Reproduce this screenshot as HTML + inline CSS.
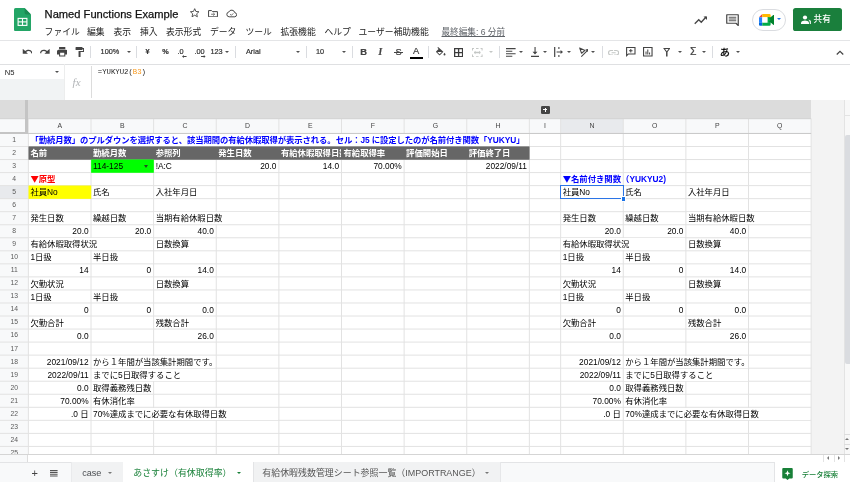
<!DOCTYPE html>
<html lang="ja"><head><meta charset="utf-8"><title>Named Functions Example</title>
<style>
html,body{margin:0;padding:0;}
html{background:#fff;}
body{will-change:transform;width:850px;height:482px;overflow:hidden;background:#fff;position:relative;font-family:"Liberation Sans","Noto Sans CJK JP",sans-serif;color:#000;}
.a{position:absolute;}
.t{position:absolute;white-space:nowrap;line-height:1;}
.cell{position:absolute;white-space:nowrap;font-size:8.35px;line-height:13.04px;height:13.04px;overflow:visible;}
.r{text-align:right;}
.j{font-family:"Noto Sans CJK JP",sans-serif;}
.b{font-weight:bold;}
.hl{position:absolute;height:1px;background:#e7e7e7;}
.vl{position:absolute;width:1px;background:#e7e7e7;}
.ch{position:absolute;font-size:6.9px;color:#444;text-align:center;line-height:14px;}
.rh{position:absolute;font-size:6.8px;color:#5a5a5a;text-align:center;left:0;width:28.4px;}
.menu{position:absolute;top:25.5px;font-size:8.8px;color:#222;white-space:nowrap;line-height:12px;}
.ic{position:absolute;}
.sep{position:absolute;top:46px;width:1px;height:12px;background:#dadce0;}
.tb{position:absolute;-webkit-text-stroke:0.2px #333;font-size:7.3px;color:#333;line-height:10px;white-space:nowrap;top:47px;}
.dd{position:absolute;width:0;height:0;margin-left:-0.2px;border-left:2.500px solid transparent;border-right:2.500px solid transparent;border-top:2.800px solid #505050;}
</style></head><body>

<div class="a" style="left:0;top:100px;width:850px;height:19px;background:#dcdcdc;"></div>
<div class="a" style="left:0;top:118.7px;width:811.1px;height:14.8px;background:#f8f9fa;"></div>
<div class="a" style="left:0;top:133.5px;width:28.4px;height:328.5px;background:#f8f9fa;"></div>
<div class="a" style="left:811.1px;top:100px;width:38.9px;height:354.3px;background:#f3f3f3;"></div>
<div class="a" style="left:560.7px;top:118.7px;width:62.6px;height:14.8px;background:#e8eaed;"></div>
<div class="a" style="left:0;top:185.6px;width:28.4px;height:13.0px;background:#e8eaed;"></div>
<svg class="a" style="left:0;top:0;" width="850" height="482" viewBox="0 0 850 482"><path d="M0 133.46H811.14M0 146.50H811.14M0 159.54H811.14M0 172.58H811.14M0 185.62H811.14M0 198.66H811.14M0 211.70H811.14M0 224.74H811.14M0 237.78H811.14M0 250.82H811.14M0 263.86H811.14M0 276.90H811.14M0 289.94H811.14M0 302.98H811.14M0 316.02H811.14M0 329.06H811.14M0 342.10H811.14M0 355.14H811.14M0 368.18H811.14M0 381.22H811.14M0 394.26H811.14M0 407.30H811.14M0 420.34H811.14M0 433.38H811.14M0 446.42H811.14M28.40 118.70V454.30M91.02 118.70V454.30M153.64 118.70V454.30M216.26 118.70V454.30M278.88 118.70V454.30M341.50 118.70V454.30M404.12 118.70V454.30M466.74 118.70V454.30M529.36 118.70V454.30M560.66 118.70V454.30M623.28 118.70V454.30M685.90 118.70V454.30M748.52 118.70V454.30M811.14 118.70V454.30" stroke="#e2e2e2" stroke-width="1" fill="none"/><path d="M0 133.46H811.14" stroke="#c9c9c9" stroke-width="1" fill="none"/><path d="M0 118.70H811.14" stroke="#d3d3d3" stroke-width="1" fill="none"/></svg>
<div class="a" style="left:25.3px;top:100px;width:3px;height:33.5px;background:#c4c4c4;"></div>
<div class="a" style="left:0;top:132.2px;width:28.3px;height:1.6px;background:#c4c4c4;"></div>
<div class="ch" style="left:28.4px;top:119.1px;width:62.6px;">A</div>
<div class="ch" style="left:91.0px;top:119.1px;width:62.6px;">B</div>
<div class="ch" style="left:153.6px;top:119.1px;width:62.6px;">C</div>
<div class="ch" style="left:216.3px;top:119.1px;width:62.6px;">D</div>
<div class="ch" style="left:278.9px;top:119.1px;width:62.6px;">E</div>
<div class="ch" style="left:341.5px;top:119.1px;width:62.6px;">F</div>
<div class="ch" style="left:404.1px;top:119.1px;width:62.6px;">G</div>
<div class="ch" style="left:466.7px;top:119.1px;width:62.6px;">H</div>
<div class="ch" style="left:529.4px;top:119.1px;width:31.3px;">I</div>
<div class="ch" style="left:560.7px;top:119.1px;width:62.6px;">N</div>
<div class="ch" style="left:623.3px;top:119.1px;width:62.6px;">O</div>
<div class="ch" style="left:685.9px;top:119.1px;width:62.6px;">P</div>
<div class="ch" style="left:748.5px;top:119.1px;width:62.6px;">Q</div>
<div class="rh" style="top:132.86px;line-height:13.04px;height:13.04px;">1</div>
<div class="rh" style="top:145.90px;line-height:13.04px;height:13.04px;">2</div>
<div class="rh" style="top:158.94px;line-height:13.04px;height:13.04px;">3</div>
<div class="rh" style="top:171.98px;line-height:13.04px;height:13.04px;">4</div>
<div class="rh" style="top:185.02px;line-height:13.04px;height:13.04px;">5</div>
<div class="rh" style="top:198.06px;line-height:13.04px;height:13.04px;">6</div>
<div class="rh" style="top:211.10px;line-height:13.04px;height:13.04px;">7</div>
<div class="rh" style="top:224.14px;line-height:13.04px;height:13.04px;">8</div>
<div class="rh" style="top:237.18px;line-height:13.04px;height:13.04px;">9</div>
<div class="rh" style="top:250.22px;line-height:13.04px;height:13.04px;">10</div>
<div class="rh" style="top:263.26px;line-height:13.04px;height:13.04px;">11</div>
<div class="rh" style="top:276.30px;line-height:13.04px;height:13.04px;">12</div>
<div class="rh" style="top:289.34px;line-height:13.04px;height:13.04px;">13</div>
<div class="rh" style="top:302.38px;line-height:13.04px;height:13.04px;">14</div>
<div class="rh" style="top:315.42px;line-height:13.04px;height:13.04px;">15</div>
<div class="rh" style="top:328.46px;line-height:13.04px;height:13.04px;">16</div>
<div class="rh" style="top:341.50px;line-height:13.04px;height:13.04px;">17</div>
<div class="rh" style="top:354.54px;line-height:13.04px;height:13.04px;">18</div>
<div class="rh" style="top:367.58px;line-height:13.04px;height:13.04px;">19</div>
<div class="rh" style="top:380.62px;line-height:13.04px;height:13.04px;">20</div>
<div class="rh" style="top:393.66px;line-height:13.04px;height:13.04px;">21</div>
<div class="rh" style="top:406.70px;line-height:13.04px;height:13.04px;">22</div>
<div class="rh" style="top:419.74px;line-height:13.04px;height:13.04px;">23</div>
<div class="rh" style="top:432.78px;line-height:13.04px;height:13.04px;">24</div>
<div class="rh" style="top:445.82px;line-height:13.04px;height:8.48px;overflow:hidden;">25</div>
<div class="a" style="left:29.00px;top:134.06px;width:499.56px;height:11.84px;background:#fff;"></div>
<svg class="a" style="left:0;top:0;" width="850" height="482"><rect x="28.50" y="146.40" width="501.06" height="13.34" fill="#666666"/></svg>
<svg class="a" style="left:0;top:0;" width="850" height="482"><rect x="91.12" y="159.44" width="62.72" height="13.34" fill="#00ff00"/></svg>
<svg class="a" style="left:0;top:0;" width="850" height="482"><rect x="28.50" y="185.52" width="62.72" height="13.34" fill="#ffff00"/></svg>
<div class="cell b" style="left:30.40px;top:134.06px;color:#0000ff;letter-spacing:-0.085px;">「勤続月数」のプルダウンを選択すると、該当期間の有給休暇取得が表示される。セル：J5 に設定したのが名前付き関数「YUKYU」</div>
<div class="cell b" style="left:30.40px;top:147.10px;color:#fff;">名前</div>
<div class="cell b" style="left:93.02px;top:147.10px;color:#fff;">勤続月数</div>
<div class="cell b" style="left:155.64px;top:147.10px;color:#fff;">参照列</div>
<div class="cell b" style="left:218.26px;top:147.10px;color:#fff;">発生日数</div>
<div class="cell b" style="left:280.88px;top:147.10px;color:#fff;width:60.2px;overflow:hidden;">有給休暇取得日数</div>
<div class="cell b" style="left:343.50px;top:147.10px;color:#fff;">有給取得率</div>
<div class="cell b" style="left:406.12px;top:147.10px;color:#fff;">評価開始日</div>
<div class="cell b" style="left:468.74px;top:147.10px;color:#fff;">評価終了日</div>
<div class="cell " style="left:93.02px;top:160.14px;">114-125</div>
<div class="dd" style="left:144.6px;top:164.9px;border-top-color:#234a23;border-left-width:2.800px;border-right-width:2.800px;border-top-width:3.100px;"></div>
<div class="cell " style="left:155.64px;top:160.14px;">!A:C</div>
<div class="cell r" style="left:216.26px;top:160.14px;width:60.22px;">20.0</div>
<div class="cell r" style="left:278.88px;top:160.14px;width:60.22px;">14.0</div>
<div class="cell r" style="left:341.50px;top:160.14px;width:60.22px;">70.00%</div>
<div class="cell r" style="left:466.74px;top:160.14px;width:60.22px;">2022/09/11</div>
<div class="cell b" style="left:30.40px;top:173.18px;color:#ff0000;margin-top:-1px;"><span class="j">▼</span>原型</div>
<div class="cell b" style="left:562.66px;top:173.18px;color:#0000ff;margin-top:-1px;"><span class="j">▼</span>名前付き関数（YUKYU2)</div>
<div class="cell " style="left:30.40px;top:186.22px;">社員No</div>
<div class="cell " style="left:93.02px;top:186.22px;">氏名</div>
<div class="cell " style="left:155.64px;top:186.22px;">入社年月日</div>
<div class="cell " style="left:30.40px;top:212.30px;">発生日数</div>
<div class="cell " style="left:93.02px;top:212.30px;">繰越日数</div>
<div class="a" style="left:154.24px;top:212.30px;width:123.84px;height:11.84px;background:#fff;"></div>
<div class="cell " style="left:155.64px;top:212.30px;">当期有給休暇日数</div>
<div class="cell r" style="left:28.40px;top:225.34px;width:60.22px;">20.0</div>
<div class="cell r" style="left:91.02px;top:225.34px;width:60.22px;">20.0</div>
<div class="cell r" style="left:153.64px;top:225.34px;width:60.22px;">40.0</div>
<div class="a" style="left:29.00px;top:238.38px;width:123.84px;height:11.84px;background:#fff;"></div>
<div class="cell " style="left:30.40px;top:238.38px;">有給休暇取得状況</div>
<div class="cell " style="left:155.64px;top:238.38px;">日数換算</div>
<div class="cell " style="left:30.40px;top:251.42px;">1日扱</div>
<div class="cell " style="left:93.02px;top:251.42px;">半日扱</div>
<div class="cell r" style="left:28.40px;top:264.46px;width:60.22px;">14</div>
<div class="cell r" style="left:91.02px;top:264.46px;width:60.22px;">0</div>
<div class="cell r" style="left:153.64px;top:264.46px;width:60.22px;">14.0</div>
<div class="cell " style="left:30.40px;top:277.50px;">欠勤状況</div>
<div class="cell " style="left:155.64px;top:277.50px;">日数換算</div>
<div class="cell " style="left:30.40px;top:290.54px;">1日扱</div>
<div class="cell " style="left:93.02px;top:290.54px;">半日扱</div>
<div class="cell r" style="left:28.40px;top:303.58px;width:60.22px;">0</div>
<div class="cell r" style="left:91.02px;top:303.58px;width:60.22px;">0</div>
<div class="cell r" style="left:153.64px;top:303.58px;width:60.22px;">0.0</div>
<div class="cell " style="left:30.40px;top:316.62px;">欠勤合計</div>
<div class="cell " style="left:155.64px;top:316.62px;">残数合計</div>
<div class="cell r" style="left:28.40px;top:329.66px;width:60.22px;">0.0</div>
<div class="cell r" style="left:153.64px;top:329.66px;width:60.22px;">26.0</div>
<div class="cell r" style="left:28.40px;top:355.74px;width:60.22px;">2021/09/12</div>
<div class="a" style="left:91.62px;top:355.74px;width:123.84px;height:11.84px;background:#fff;"></div>
<div class="cell " style="left:93.02px;top:355.74px;">から１年間が当該集計期間です。</div>
<div class="cell r" style="left:28.40px;top:368.78px;width:60.22px;">2022/09/11</div>
<div class="a" style="left:91.62px;top:368.78px;width:123.84px;height:11.84px;background:#fff;"></div>
<div class="cell " style="left:93.02px;top:368.78px;">までに5日取得すること</div>
<div class="cell r" style="left:28.40px;top:381.82px;width:60.22px;">0.0</div>
<div class="cell " style="left:93.02px;top:381.82px;">取得義務残日数</div>
<div class="cell r" style="left:28.40px;top:394.86px;width:60.22px;">70.00%</div>
<div class="cell " style="left:93.02px;top:394.86px;">有休消化率</div>
<div class="cell r" style="left:28.40px;top:407.90px;width:60.22px;">.0 日</div>
<div class="a" style="left:91.62px;top:407.90px;width:186.46px;height:11.84px;background:#fff;"></div>
<div class="cell " style="left:93.02px;top:407.90px;">70%達成までに必要な有休取得日数</div>
<div class="cell " style="left:562.66px;top:186.22px;">社員No</div>
<div class="cell " style="left:625.28px;top:186.22px;">氏名</div>
<div class="cell " style="left:687.90px;top:186.22px;">入社年月日</div>
<div class="cell " style="left:562.66px;top:212.30px;">発生日数</div>
<div class="cell " style="left:625.28px;top:212.30px;">繰越日数</div>
<div class="a" style="left:686.50px;top:212.30px;width:123.84px;height:11.84px;background:#fff;"></div>
<div class="cell " style="left:687.90px;top:212.30px;">当期有給休暇日数</div>
<div class="cell r" style="left:560.66px;top:225.34px;width:60.22px;">20.0</div>
<div class="cell r" style="left:623.28px;top:225.34px;width:60.22px;">20.0</div>
<div class="cell r" style="left:685.90px;top:225.34px;width:60.22px;">40.0</div>
<div class="a" style="left:561.26px;top:238.38px;width:123.84px;height:11.84px;background:#fff;"></div>
<div class="cell " style="left:562.66px;top:238.38px;">有給休暇取得状況</div>
<div class="cell " style="left:687.90px;top:238.38px;">日数換算</div>
<div class="cell " style="left:562.66px;top:251.42px;">1日扱</div>
<div class="cell " style="left:625.28px;top:251.42px;">半日扱</div>
<div class="cell r" style="left:560.66px;top:264.46px;width:60.22px;">14</div>
<div class="cell r" style="left:623.28px;top:264.46px;width:60.22px;">0</div>
<div class="cell r" style="left:685.90px;top:264.46px;width:60.22px;">14.0</div>
<div class="cell " style="left:562.66px;top:277.50px;">欠勤状況</div>
<div class="cell " style="left:687.90px;top:277.50px;">日数換算</div>
<div class="cell " style="left:562.66px;top:290.54px;">1日扱</div>
<div class="cell " style="left:625.28px;top:290.54px;">半日扱</div>
<div class="cell r" style="left:560.66px;top:303.58px;width:60.22px;">0</div>
<div class="cell r" style="left:623.28px;top:303.58px;width:60.22px;">0</div>
<div class="cell r" style="left:685.90px;top:303.58px;width:60.22px;">0.0</div>
<div class="cell " style="left:562.66px;top:316.62px;">欠勤合計</div>
<div class="cell " style="left:687.90px;top:316.62px;">残数合計</div>
<div class="cell r" style="left:560.66px;top:329.66px;width:60.22px;">0.0</div>
<div class="cell r" style="left:685.90px;top:329.66px;width:60.22px;">26.0</div>
<div class="cell r" style="left:560.66px;top:355.74px;width:60.22px;">2021/09/12</div>
<div class="a" style="left:623.88px;top:355.74px;width:123.84px;height:11.84px;background:#fff;"></div>
<div class="cell " style="left:625.28px;top:355.74px;">から１年間が当該集計期間です。</div>
<div class="cell r" style="left:560.66px;top:368.78px;width:60.22px;">2022/09/11</div>
<div class="a" style="left:623.88px;top:368.78px;width:123.84px;height:11.84px;background:#fff;"></div>
<div class="cell " style="left:625.28px;top:368.78px;">までに5日取得すること</div>
<div class="cell r" style="left:560.66px;top:381.82px;width:60.22px;">0.0</div>
<div class="cell " style="left:625.28px;top:381.82px;">取得義務残日数</div>
<div class="cell r" style="left:560.66px;top:394.86px;width:60.22px;">70.00%</div>
<div class="cell " style="left:625.28px;top:394.86px;">有休消化率</div>
<div class="cell r" style="left:560.66px;top:407.90px;width:60.22px;">.0 日</div>
<div class="a" style="left:623.88px;top:407.90px;width:186.46px;height:11.84px;background:#fff;"></div>
<div class="cell " style="left:625.28px;top:407.90px;">70%達成までに必要な有休取得日数</div>
<div class="a" style="left:559.86px;top:184.82px;width:64.02px;height:14.44px;border:1.4px solid #2b74e6;box-sizing:border-box;"></div>
<div class="a" style="left:620.68px;top:196.06px;width:3.6px;height:3.6px;background:#1a73e8;border:0.5px solid #fff;"></div>
<div class="a" style="left:541px;top:105.5px;width:8.5px;height:8.5px;background:#444;border-radius:1.3px;"></div>
<div class="a" style="left:543.2px;top:109.3px;width:4.2px;height:1px;background:#fff;"></div><div class="a" style="left:544.8px;top:107.7px;width:1px;height:4.2px;background:#fff;"></div>
<div class="a" style="left:843.5px;top:100px;width:6.5px;height:354px;background:#f8f8f8;border-left:1px solid #e3e3e3;box-sizing:border-box;"></div>
<div class="a" style="left:844px;top:114.500px;width:6px;height:1px;background:#e3e3e3;"></div>
<div class="a" style="left:845.3px;top:134.5px;width:4.7px;height:229px;background:#dadce0;border-radius:2px 0 0 2px;"></div>
<div class="a" style="left:843.5px;top:434px;width:6.5px;height:1px;background:#ddd;"></div><div class="a" style="left:843.5px;top:444px;width:6.5px;height:1px;background:#ddd;"></div>
<div class="a" style="left:845.200px;top:438.200px;width:0;height:0;border-left:2px solid transparent;border-right:2px solid transparent;border-bottom:2.500px solid #777;"></div>
<div class="a" style="left:845.200px;top:447.600px;width:0;height:0;border-left:2px solid transparent;border-right:2px solid transparent;border-top:2.500px solid #777;"></div>
<div class="a" style="left:0;top:454.3px;width:850px;height:8px;background:#fff;"></div>
<div class="a" style="left:0;top:454.3px;width:28.3px;height:8px;background:#f8f9fa;border-right:1px solid #ddd;box-sizing:border-box;"></div>
<div class="a" style="left:0;top:453.8px;width:850px;height:1px;background:#d5d5d5;"></div>
<div class="a" style="left:822.5px;top:454.8px;width:1px;height:7px;background:#e3e3e3;"></div><div class="a" style="left:833.5px;top:454.8px;width:1px;height:7px;background:#e3e3e3;"></div><div class="a" style="left:843.5px;top:454.8px;width:1px;height:7px;background:#e3e3e3;"></div>
<div class="a" style="left:826.600px;top:456.200px;width:0;height:0;border-top:2.100px solid transparent;border-bottom:2.100px solid transparent;border-right:2.600px solid #777;"></div>
<div class="a" style="left:837.800px;top:456.200px;width:0;height:0;border-top:2.100px solid transparent;border-bottom:2.100px solid transparent;border-left:2.600px solid #777;"></div><!-- ===== header ===== -->
<div class="a" style="left:0;top:0;width:850px;height:40px;background:#fff;"></div>
<svg class="ic" style="left:14px;top:8.2px;" width="17" height="23.2" viewBox="0 0 17 23.2">
  <path d="M1.6 0 H10.6 L17 6.4 V21.6 Q17 23.2 15.4 23.2 H1.6 Q0 23.2 0 21.6 V1.6 Q0 0 1.6 0 Z" fill="#23a566"/>
  <path d="M10.6 0 L17 6.4 H12.2 Q10.6 6.4 10.6 4.8 Z" fill="#1c8a53"/>
  <rect x="4.1" y="10.4" width="8.8" height="7" fill="none" stroke="#fff" stroke-width="1.1"/>
  <line x1="8.5" y1="10.4" x2="8.5" y2="17.4" stroke="#fff" stroke-width="1.1"/>
  <line x1="4.1" y1="13.9" x2="12.9" y2="13.9" stroke="#fff" stroke-width="1.1"/>
</svg>
<div class="t" id="title" style="left:44.6px;top:7.6px;font-size:11.15px;line-height:13px;color:#111;letter-spacing:0px;-webkit-text-stroke:0.25px #111;">Named Functions Example</div>
<!-- star, move, cloud -->
<svg class="ic" style="left:189.400px;top:7.400px;" width="11.400" height="11.400" viewBox="0 0 24 24"><path d="M12 3.500l2.600 5.900 6.400.600-4.800 4.300 1.400 6.300L12 17.300 6.400 20.600l1.400-6.300L3 10l6.400-.600z" fill="none" stroke="#444" stroke-width="1.900"/></svg>
<svg class="ic" style="left:208px;top:9.700px;" width="10" height="7.400" viewBox="0 0 21 15.500"><path d="M1.200 1.200h6.300l2 2.200h10.300v10.900H1.200z" fill="none" stroke="#444" stroke-width="2.100" stroke-linejoin="round"/><path d="M6.500 8.900h7M11 6l3 2.900-3 2.900" fill="none" stroke="#444" stroke-width="1.500"/></svg>
<svg class="ic" style="left:225.5px;top:9.3px;" width="11.5" height="9" viewBox="0 0 26 20"><path d="M7 17.5a5.5 5.5 0 0 1-.6-10.9A7 7 0 0 1 19.7 8 4.8 4.8 0 0 1 20 17.5z" fill="none" stroke="#444" stroke-width="2.2"/><path d="M9.5 11.5l2.6 2.6 4.4-4.4" fill="none" stroke="#444" stroke-width="1.8"/></svg>

<!-- menus -->
<div class="menu" style="left:44.6px;">ファイル</div>
<div class="menu" style="left:87px;">編集</div>
<div class="menu" style="left:113.5px;">表示</div>
<div class="menu" style="left:140px;">挿入</div>
<div class="menu" style="left:166px;">表示形式</div>
<div class="menu" style="left:210px;">データ</div>
<div class="menu" style="left:245.5px;">ツール</div>
<div class="menu" style="left:280.5px;">拡張機能</div>
<div class="menu" style="left:324.5px;">ヘルプ</div>
<div class="menu" style="left:358.5px;">ユーザー補助機能</div>
<div class="menu" style="left:441.5px;color:#5f6368;text-decoration:underline;font-size:8.600px;">最終編集: 6 分前</div>

<!-- top right -->
<svg class="ic" style="left:693.5px;top:14.5px;" width="14" height="10" viewBox="0 0 28 20"><path d="M1.5 17.5l8-8 5 5 10-11" fill="none" stroke="#444" stroke-width="2.6"/><path d="M19 3h7v7z" fill="#444"/></svg>
<svg class="ic" style="left:725.600px;top:13.700px;" width="13" height="12" viewBox="0 0 26 24"><path d="M1.500 1.500h23v21.500l-4.500-4.500H1.500z" fill="none" stroke="#444" stroke-width="2.400" stroke-linejoin="round"/><path d="M5.500 6.500h15M5.500 10h15M5.500 13.500h15" stroke="#444" stroke-width="1.800"/></svg>
<div class="a" style="left:752.3px;top:8.8px;width:33.6px;height:21.8px;border:1px solid #dadce0;border-radius:11px;box-sizing:border-box;background:#fff;"></div>
<svg class="ic" style="left:759px;top:13.900px;" width="15.200" height="11.800" viewBox="0 0 30 23.300">
  <path d="M0 6.500 L6.500 0 V6.500 Z" fill="#ea4335"/>
  <path d="M6.500 0 H20.500 Q23 0 23 2.500 V8 L19 6.500 H6.500 Z" fill="#ffba00"/>
  <rect x="0" y="6.500" width="6.500" height="10.500" fill="#2684fc"/>
  <path d="M0 17 H6.500 V23.300 H2.200 Q0 23.300 0 21.100 Z" fill="#0066da"/>
  <path d="M6.500 16.800 H19 L23 15.300 V20.800 Q23 23.300 20.500 23.300 H6.500 Z" fill="#00ac47"/>
  <path d="M16.800 6.500 H23 L28.200 2.200 Q30 1 30 3.200 V20.100 Q30 22.300 28.200 21.100 L23 16.800 H16.800 Z" fill="#00832d"/>
  <path d="M16.800 6.500 H19 L23 11.650 L19 16.800 H16.800 Z" fill="#00ac47"/>
  <rect x="6.500" y="6.500" width="10.300" height="10.300" fill="#fff"/>
</svg>
<div class="dd" style="left:777.4px;top:18.4px;border-top-color:#1a73e8;border-left-width:2.3px;border-right-width:2.3px;border-top-width:2.6px;"></div>
<div class="a" style="left:793px;top:8.4px;width:48.6px;height:22.4px;background:#1a7f3c;border-radius:2.6px;"></div>
<svg class="ic" style="left:800.5px;top:14.6px;" width="10.5" height="9.5" viewBox="0 0 21 19"><circle cx="8" cy="5" r="4.2" fill="#fff"/><path d="M0 18v-2.4C0 12.3 5.3 10.8 8 10.8s8 1.5 8 4.8V18z" fill="#fff"/><path d="M14.5 9.6c2.4.2 6.3 1.6 6.3 4.5V18h-3.3v-3c0-2.2-1.3-3.900-3-5.400z" fill="#fff" opacity=".85"/></svg>
<div class="t" style="left:813.6px;top:14.2px;font-size:8.6px;line-height:11px;color:#fff;font-weight:500;">共有</div>

<!-- ===== toolbar ===== -->
<div class="a" style="left:0;top:39.6px;width:850px;height:1px;background:#e4e5e7;"></div>

<!-- undo / redo / print / paint -->
<svg class="ic" style="left:22px;top:49px;" width="10.4" height="6" viewBox="0 0 21 12"><path d="M6.5 4.200C8.500 2.500 11 1.500 13.800 1.500c3.800 0 6.300 2.300 7.200 6.500l-2.300.8C18 5.600 16.300 4 13.600 4c-2 0-3.800.8-5.200 2L12 9.500H1.500V-.5z" fill="#444"/></svg>
<svg class="ic" style="left:39.8px;top:49px;" width="10.4" height="6" viewBox="0 0 21 12"><g transform="translate(21,0) scale(-1,1)"><path d="M6.500 4.200C8.500 2.500 11 1.500 13.800 1.500c3.800 0 6.300 2.300 7.200 6.500l-2.300.8C18 5.600 16.300 4 13.600 4c-2 0-3.800.8-5.200 2L12 9.500H1.500V-.5z" fill="#444"/></g></svg>
<svg class="ic" style="left:56.6px;top:47.4px;" width="10.4" height="9.6" viewBox="0 0 20 18"><path d="M17 5H3a3 3 0 0 0-3 3v6h4v4h12v-4h4V8a3 3 0 0 0-3-3zm-3 11H6v-5h8zM16 0H4v4h12z" fill="#444"/></svg>
<svg class="ic" style="left:74.8px;top:47.3px;" width="9.6" height="10" viewBox="0 0 19 20"><path d="M15 1a1 1 0 0 0-1-1H2a1 1 0 0 0-1 1v4a1 1 0 0 0 1 1h12a1 1 0 0 0 1-1V4h1v4H7v11a1 1 0 0 0 1 1h2a1 1 0 0 0 1-1v-9h8V2h-4z" fill="#444"/></svg>
<div class="sep" style="left:90px;"></div>
<div class="tb" style="left:100.6px;">100%</div>
<div class="dd" style="left:126.8px;top:51.4px;"></div>
<div class="sep" style="left:136.2px;"></div>
<div class="tb" style="left:145.4px;font-weight:bold;">¥</div>
<div class="tb" style="left:162.2px;font-weight:bold;">%</div>
<div class="tb" style="left:177.6px;top:46.8px;">.0</div>
<svg class="ic" style="left:182.300px;top:55.2px;" width="4.600" height="3" viewBox="0 0 9 6"><path d="M9 2.200H3.500V0L0 3l3.500 3V3.800H9z" fill="#444"/></svg>
<div class="tb" style="left:194.400px;top:46.8px;">.00</div>
<svg class="ic" style="left:201.3px;top:55.2px;" width="4.600" height="3" viewBox="0 0 9 6"><path d="M0 2.200h5.500V0L9 3 5.500 6V3.800H0z" fill="#444"/></svg>
<div class="tb" style="left:210.500px;">123</div>
<div class="dd" style="left:225px;top:51.4px;"></div>
<div class="sep" style="left:235.2px;"></div>
<div class="tb" style="left:246px;">Arial</div>
<div class="dd" style="left:296px;top:51.4px;"></div>
<div class="sep" style="left:306.300px;"></div>
<div class="tb" style="left:316px;">10</div>
<div class="dd" style="left:342.3px;top:51.4px;"></div>
<div class="sep" style="left:352px;"></div>
<div class="tb" style="left:360.300px;top:46.2px;font-weight:bold;font-size:9.4px;line-height:12px;color:#444;">B</div>
<div class="tb" style="left:378.400px;top:46.2px;font-style:italic;font-size:9.4px;line-height:12px;color:#444;font-family:'Liberation Serif',serif;font-weight:bold;">I</div>
<div class="tb" style="left:395.400px;top:46.2px;font-size:9.2px;line-height:12px;color:#444;">S</div>
<div class="a" style="left:393.800px;top:52.1px;width:8.800px;height:1px;background:#444;"></div>
<div class="tb" style="left:412.900px;top:44.8px;font-size:9.4px;line-height:12px;color:#444;">A</div>
<div class="a" style="left:409.700px;top:57px;width:13.4px;height:2.300px;background:#000;"></div>
<div class="sep" style="left:428.400px;"></div>
<!-- fill bucket -->
<svg class="ic" style="left:435.600px;top:47.2px;" width="10" height="9.6" viewBox="0 0 20 19"><path d="M4.200 0L2.800 1.400l2.400 2.400L.6 8.400a1.500 1.500 0 0 0 0 2.100l5.500 5.500a1.500 1.500 0 0 0 2.100 0l6.600-6.600zm3 14.500L2.700 10h9z" fill="#444"/><path d="M17 11.500s-2 2.200-2 3.500a2 2 0 0 0 4 0c0-1.300-2-3.500-2-3.500z" fill="#444"/></svg>
<!-- borders -->
<svg class="ic" style="left:454.2px;top:47.600px;" width="9.2" height="9.2" viewBox="0 0 18 18"><path d="M0 0v18h18V0zm7.700 15.500H2.500v-5.200h5.200zm0-7.800H2.500V2.500h5.200zm7.800 7.800h-5.200v-5.200h5.200zm0-7.800h-5.200V2.500h5.200z" fill="#3c3c3c"/></svg>
<!-- merge (disabled) -->
<svg class="ic" style="left:472.300px;top:47.600px;" width="10.600" height="9.2" viewBox="0 0 21 18"><path d="M0 0h4v2H2v3H0zm8 0h5v2H8zm9 0h4v5h-2V2h-2zM0 13h2v3h2v2H0zm19 0h2v5h-4v-2h2zM8 16h5v2H8zM4 8l3-2.500v2h7v-2L17 8v2l-3 2.500v-2H7v2L4 10z" fill="#c4c7c5"/></svg>
<div class="dd" style="left:489.2px;top:51.4px;border-top-color:#c4c7c5;"></div>
<div class="sep" style="left:499.2px;"></div>
<!-- halign -->
<svg class="ic" style="left:506px;top:47.800px;" width="9.600" height="8.800" viewBox="0 0 19 17"><path d="M0 0h19v2.200H0zm0 5h12.500v2.200H0zm0 5h19v2.200H0zm0 5h12.500v2.200H0z" fill="#444"/></svg>
<div class="dd" style="left:519.2px;top:51.4px;"></div>
<!-- valign -->
<svg class="ic" style="left:530.600px;top:47.3px;" width="8" height="10" viewBox="0 0 16 20"><path d="M0 17.600h16V20H0zM7 0h2.200v9.500H13L8 15 3 9.500h4z" fill="#444"/></svg>
<div class="dd" style="left:543px;top:51.4px;"></div>
<!-- wrap -->
<svg class="ic" style="left:554px;top:47.2px;" width="9.200" height="10" viewBox="0 0 18 20"><path d="M0 0h2.400v20H0z" fill="#444"/><path d="M8.500 0h2.200v4H8.500zm0 16h2.200v4H8.500z" fill="#444"/><path d="M5 8.900h8V6l5 4-5 4v-2.900H5z" fill="#444"/></svg>
<div class="dd" style="left:567.2px;top:51.4px;"></div>
<!-- rotate -->
<svg class="ic" style="left:578.600px;top:47.400px;" width="9.600" height="9.800" viewBox="0 0 19 19.500"><path d="M1.200 1.800L12 6.800 5 12.500z" fill="none" stroke="#444" stroke-width="2.100" stroke-linejoin="round"/><path d="M4.500 19L17 6.500" fill="none" stroke="#444" stroke-width="2.100"/><path d="M12.500 5.200l6-1.200-1.200 6z" fill="#444"/></svg>
<div class="dd" style="left:591.600px;top:51.4px;"></div>
<div class="sep" style="left:601.700px;"></div>
<!-- link (disabled) -->
<svg class="ic" style="left:608px;top:49.600px;" width="11.200" height="5.600" viewBox="0 0 22 11"><path d="M2.200 5.500A3.300 3.300 0 0 1 5.500 2.200H10V0H5.500a5.500 5.500 0 0 0 0 11H10V8.800H5.500A3.300 3.300 0 0 1 2.200 5.500zM7 6.600h8V4.400H7zM16.500 0H12v2.200h4.500a3.300 3.300 0 0 1 0 6.600H12V11h4.500a5.500 5.500 0 0 0 0-11z" fill="#c4c7c5"/></svg>
<!-- comment add -->
<svg class="ic" style="left:626px;top:47.400px;" width="9.600" height="10" viewBox="0 0 19 20"><path d="M0 0h19v15H5l-5 5zm2.200 2.200v12.500l2-1.900H16.800V2.200zM8.500 4.200h2v2.500H13v2h-2.500v2.500h-2V8.700H6v-2h2.500z" fill="#444"/></svg>
<!-- chart -->
<svg class="ic" style="left:643.400px;top:47.400px;" width="9.600" height="9.600" viewBox="0 0 19 19"><path d="M0 0h19v19H0zm2.200 2.200v14.600h14.600V2.200zM5 9h2v6H5zm3.500-4h2v10h-2zM12 11h2v4h-2z" fill="#444"/></svg>
<!-- filter -->
<svg class="ic" style="left:662.600px;top:48.200px;" width="7.600" height="8.400" viewBox="0 0 15 17"><path d="M0 0h15L9 8v9H6V8zm4 2l3.500 4.700L11 2z" fill="#444"/></svg>
<div class="dd" style="left:678px;top:51.4px;"></div>
<div class="tb" style="left:690px;top:45.2px;font-size:10.4px;line-height:13px;color:#444;">Σ</div>
<div class="dd" style="left:701.800px;top:51.4px;"></div>
<div class="sep" style="left:712.2px;"></div>
<div class="tb" style="left:719.800px;top:45.5px;font-size:10.2px;line-height:13px;color:#000;font-weight:500;">あ</div>
<div class="dd" style="left:736px;top:51.4px;"></div>
<svg class="ic" style="left:836.400px;top:49.800px;" width="8" height="5" viewBox="0 0 16 10"><path d="M1.500 9L8 2.500 14.500 9" fill="none" stroke="#444" stroke-width="2.400"/></svg>

<!-- ===== formula bar ===== -->
<div class="a" style="left:0;top:64.400px;width:850px;height:35.600px;background:#fff;"></div>
<div class="a" style="left:0;top:79px;width:64px;height:21px;background:#f1f3f4;"></div>
<div class="a" style="left:0;top:63.8px;width:850px;height:1px;background:#dfe0e2;"></div>
<div class="a" style="left:63.600px;top:64.400px;width:1px;height:35.600px;background:#eceded;"></div>
<div class="a" style="left:91px;top:66px;width:1px;height:32px;background:#dcdcdc;"></div>
<div class="t" style="left:4.800px;top:67.600px;font-size:7.600px;line-height:10px;color:#222;">N5</div>
<div class="dd" style="left:55.400px;top:71.400px;"></div>
<div class="t" style="left:72.600px;top:75px;font-size:11px;line-height:14px;color:#b0b3b6;font-family:'Liberation Serif',serif;font-style:italic;">fx</div>
<div class="t" style="left:97.800px;top:67.200px;font-size:7.300px;line-height:10px;color:#222;font-family:'Liberation Mono',monospace;">=YUKYU2(<span style="color:#f7981d;">B3</span>)</div>
<!-- ===== sheet tabs ===== -->
<div class="a" style="left:0;top:462px;width:850px;height:20px;background:#f8f9fa;"></div>
<div class="a" style="left:0;top:461.600px;width:850px;height:1px;background:#e3e4e6;"></div>
<div class="a" style="left:71.800px;top:462px;width:51.600px;height:20px;background:#f1f2f3;"></div>
<div class="a" style="left:123.400px;top:461.600px;width:129.400px;height:20.400px;background:#fff;"></div>
<div class="a" style="left:252.800px;top:462px;width:247.400px;height:20px;background:#f1f2f3;"></div>
<div class="a" style="left:252.500px;top:462px;width:1px;height:20px;background:#e3e4e6;"></div>
<div class="a" style="left:500px;top:462px;width:1px;height:20px;background:#e6e7e9;"></div>
<div class="a" style="left:71.300px;top:462px;width:1px;height:20px;background:#e9eaec;"></div>
<div class="t" style="left:31.400px;top:466.800px;font-size:11px;line-height:12px;color:#444;">+</div>
<svg class="ic" style="left:50.200px;top:470.200px;" width="7.600" height="6.600" viewBox="0 0 15 13"><path d="M0 0h15v2.200H0zm0 3.600h15v2.200H0zm0 3.600h15v2.200H0zm0 3.600h15V13H0z" fill="#555"/></svg>
<div class="t" style="left:82.200px;top:468.400px;font-size:9.100px;line-height:11px;color:#4a4d51;">case</div>
<div class="dd" style="left:108.200px;top:472.300px;border-top-color:#777;"></div>
<div class="t" style="left:133.200px;top:467.900px;font-size:8.950px;line-height:11px;color:#188038;">あさすけ（有休取得率）</div>
<div class="dd" style="left:237.200px;top:472.300px;border-top-color:#188038;"></div>
<div class="t" style="left:262.300px;top:467.900px;font-size:8.950px;line-height:11px;color:#555;">有給休暇残数管理シート参照一覧（IMPORTRANGE）</div>
<div class="dd" style="left:485.600px;top:472.300px;border-top-color:#777;"></div>
<!-- explore button -->
<div class="a" style="left:774.400px;top:462px;width:75.600px;height:20px;background:#fff;border-left:1px solid #e3e4e6;box-sizing:border-box;"></div>
<svg class="ic" style="left:781.800px;top:467.800px;" width="11" height="12" viewBox="0 0 21 24"><path d="M2 0h17a2 2 0 0 1 2 2v17a2 2 0 0 1-2 2h-5l-3.500 3L7 21H2a2 2 0 0 1-2-2V2a2 2 0 0 1 2-2z" fill="#188038"/><path d="M10.500 4.500l1.700 4.300 4.300 1.700-4.300 1.700-1.700 4.300-1.700-4.300-4.300-1.700 4.300-1.700z" fill="#fff"/></svg>
<div class="t" style="left:801.700px;top:468.600px;font-size:7.300px;line-height:11px;color:#188038;font-weight:500;">データ探索</div>
</body></html>
